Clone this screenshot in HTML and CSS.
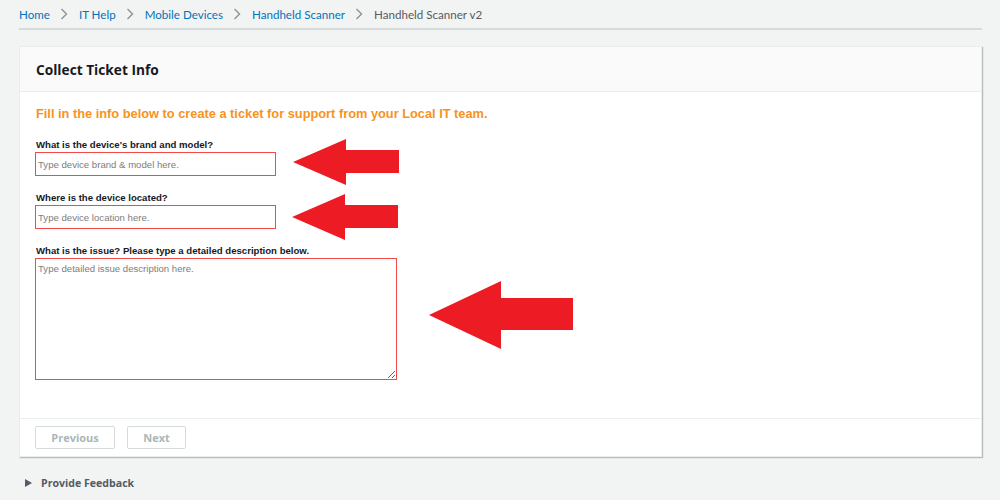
FILE: index.html
```html
<!DOCTYPE html>
<html lang="en">
<head>
<meta charset="utf-8">
<title>Collect Ticket Info</title>
<link rel="stylesheet" href="styles.css">
</head>
<body>
<div class="page">
  <nav class="crumbs">
    <a class="crumb" href="#">Home</a>
    <span class="sep"><svg width="8" height="12" viewBox="0 0 8 12"><path d="M1.5 1 L6.5 6 L1.5 11" fill="none" stroke="#879596" stroke-width="1.4"/></svg></span>
    <a class="crumb" href="#">IT Help</a>
    <span class="sep"><svg width="8" height="12" viewBox="0 0 8 12"><path d="M1.5 1 L6.5 6 L1.5 11" fill="none" stroke="#879596" stroke-width="1.4"/></svg></span>
    <a class="crumb" href="#">Mobile Devices</a>
    <span class="sep"><svg width="8" height="12" viewBox="0 0 8 12"><path d="M1.5 1 L6.5 6 L1.5 11" fill="none" stroke="#879596" stroke-width="1.4"/></svg></span>
    <a class="crumb" href="#">Handheld Scanner</a>
    <span class="sep"><svg width="8" height="12" viewBox="0 0 8 12"><path d="M1.5 1 L6.5 6 L1.5 11" fill="none" stroke="#879596" stroke-width="1.4"/></svg></span>
    <span class="crumb current">Handheld Scanner v2</span>
  </nav>

  <section class="card">
    <header class="card-head">Collect Ticket Info</header>
    <div class="card-body">
      <p class="intro">Fill in the info below to create a ticket for support from your Local IT team.</p>
      <label class="lbl">What is the device's brand and model?</label>
      <input class="field short" type="text" placeholder="Type device brand &amp; model here.">
      <label class="lbl">Where is the device located?</label>
      <input class="field short" type="text" placeholder="Type device location here.">
      <label class="lbl">What is the issue? Please type a detailed description below.</label>
      <textarea class="field area" placeholder="Type detailed issue description here."></textarea>

      <svg class="arrow a1" width="107" height="46" viewBox="0 0 107 46"><polygon points="0,23 53,0 53,11 106,11 106,34 53,34 53,46" fill="#ed1c24"/></svg>
      <svg class="arrow a2" width="107" height="46" viewBox="0 0 107 46"><polygon points="0,23 53,0 53,11 106,11 106,34 53,34 53,46" fill="#ed1c24"/></svg>
      <svg class="arrow a3" width="145" height="68" viewBox="0 0 145 68"><polygon points="0,34 72,0 72,17 144,17 144,49 72,49 72,68" fill="#ed1c24"/></svg>
    </div>
    <footer class="card-foot">
      <button class="btn prev" type="button">Previous</button>
      <button class="btn next" type="button">Next</button>
    </footer>
  </section>

  <div class="feedback"><span class="tri"></span>Provide Feedback</div>
</div>
</body>
</html>
```

FILE: styles.css
```css
html, body {
  margin: 0;
  padding: 0;
  background: #f2f3f3;
}
body {
  font-family: "Lato", "Liberation Sans", Arial, sans-serif;
  color: #16191f;
}
.page {
  padding: 0 18px 0 19px;
}
.crumbs {
  display: flex;
  align-items: center;
  height: 28px;
  border-bottom: 2px solid #d5dbdb;
  font-family: "Lato", sans-serif;
  font-size: 11.6px;
}
.crumb {
  color: #0073bb;
  text-decoration: none;
}
.crumb.current {
  color: #545b64;
}
.sep {
  display: flex;
  align-items: center;
  padding: 0 11px 0 10px;
}
.card {
  margin-top: 16px;
  background: #fff;
  border: 1px solid #eaeded;
  box-shadow: 1px 1px 1px 0 rgba(0, 28, 36, 0.25);
}
.card-head {
  height: 44px;
  display: flex;
  align-items: center;
  padding-left: 16px;
  background: #fafafa;
  border-bottom: 1px solid #eaeded;
  font-family: "Open Sans", sans-serif;
  font-weight: 700;
  font-size: 13.7px;
  color: #16191f;
}
.card-body {
  position: relative;
  padding: 14px 15px 38px 15px;
  display: flex;
  flex-direction: column;
  align-items: flex-start;
  font-family: "Liberation Sans", Arial, sans-serif;
}
.intro {
  margin: 0 0 16px 1px;
  font-size: 12.8px;
  line-height: 16px;
  font-weight: 700;
  color: #f7931e;
}
.lbl {
  margin-left: 1px;
  font-size: 9.6px;
  line-height: 13px;
  font-weight: 700;
  color: #16191f;
  margin-bottom: 1px;
}
.field {
  box-sizing: border-box;
  border: 1px solid #f24a4a;
  border-radius: 0;
  background: #fff;
  font-family: "Liberation Sans", Arial, sans-serif;
  font-size: 9.6px;
  padding: 0 2px;
  color: #16191f;
  outline: none;
  margin: 0 0 15px 0;
}
.field::placeholder {
  color: #7d7d7d;
}
.short {
  width: 241px;
  height: 24px;
}
.area {
  width: 362px;
  height: 122px;
  padding-top: 4px;
  margin-bottom: 0;
  resize: both;
}
.arrow {
  position: absolute;
}
.a1 { left: 273px; top: 47px; }
.a2 { left: 272px; top: 102px; }
.a3 { left: 409px; top: 189px; }
.card-foot {
  border-top: 1px solid #eaeded;
  padding: 7px 15px 7px 15px;
  display: flex;
  gap: 12px;
}
.btn {
  box-sizing: border-box;
  height: 23px;
  background: #fff;
  border: 1px solid #d5dbdb;
  border-radius: 2px;
  font-family: "Open Sans", sans-serif;
  font-weight: 700;
  font-size: 11px;
  color: #aab7b8;
  padding: 0;
}
.prev { width: 80px; }
.next { width: 59px; }
.feedback {
  display: flex;
  align-items: center;
  margin-top: 19px;
  padding-left: 6px;
  font-family: "Open Sans", sans-serif;
  font-weight: 700;
  font-size: 10.6px;
  color: #545b64;
}
.tri {
  width: 0;
  height: 0;
  border-top: 4.5px solid transparent;
  border-bottom: 4.5px solid transparent;
  border-left: 7px solid #545b64;
  margin-right: 9px;
}
```
